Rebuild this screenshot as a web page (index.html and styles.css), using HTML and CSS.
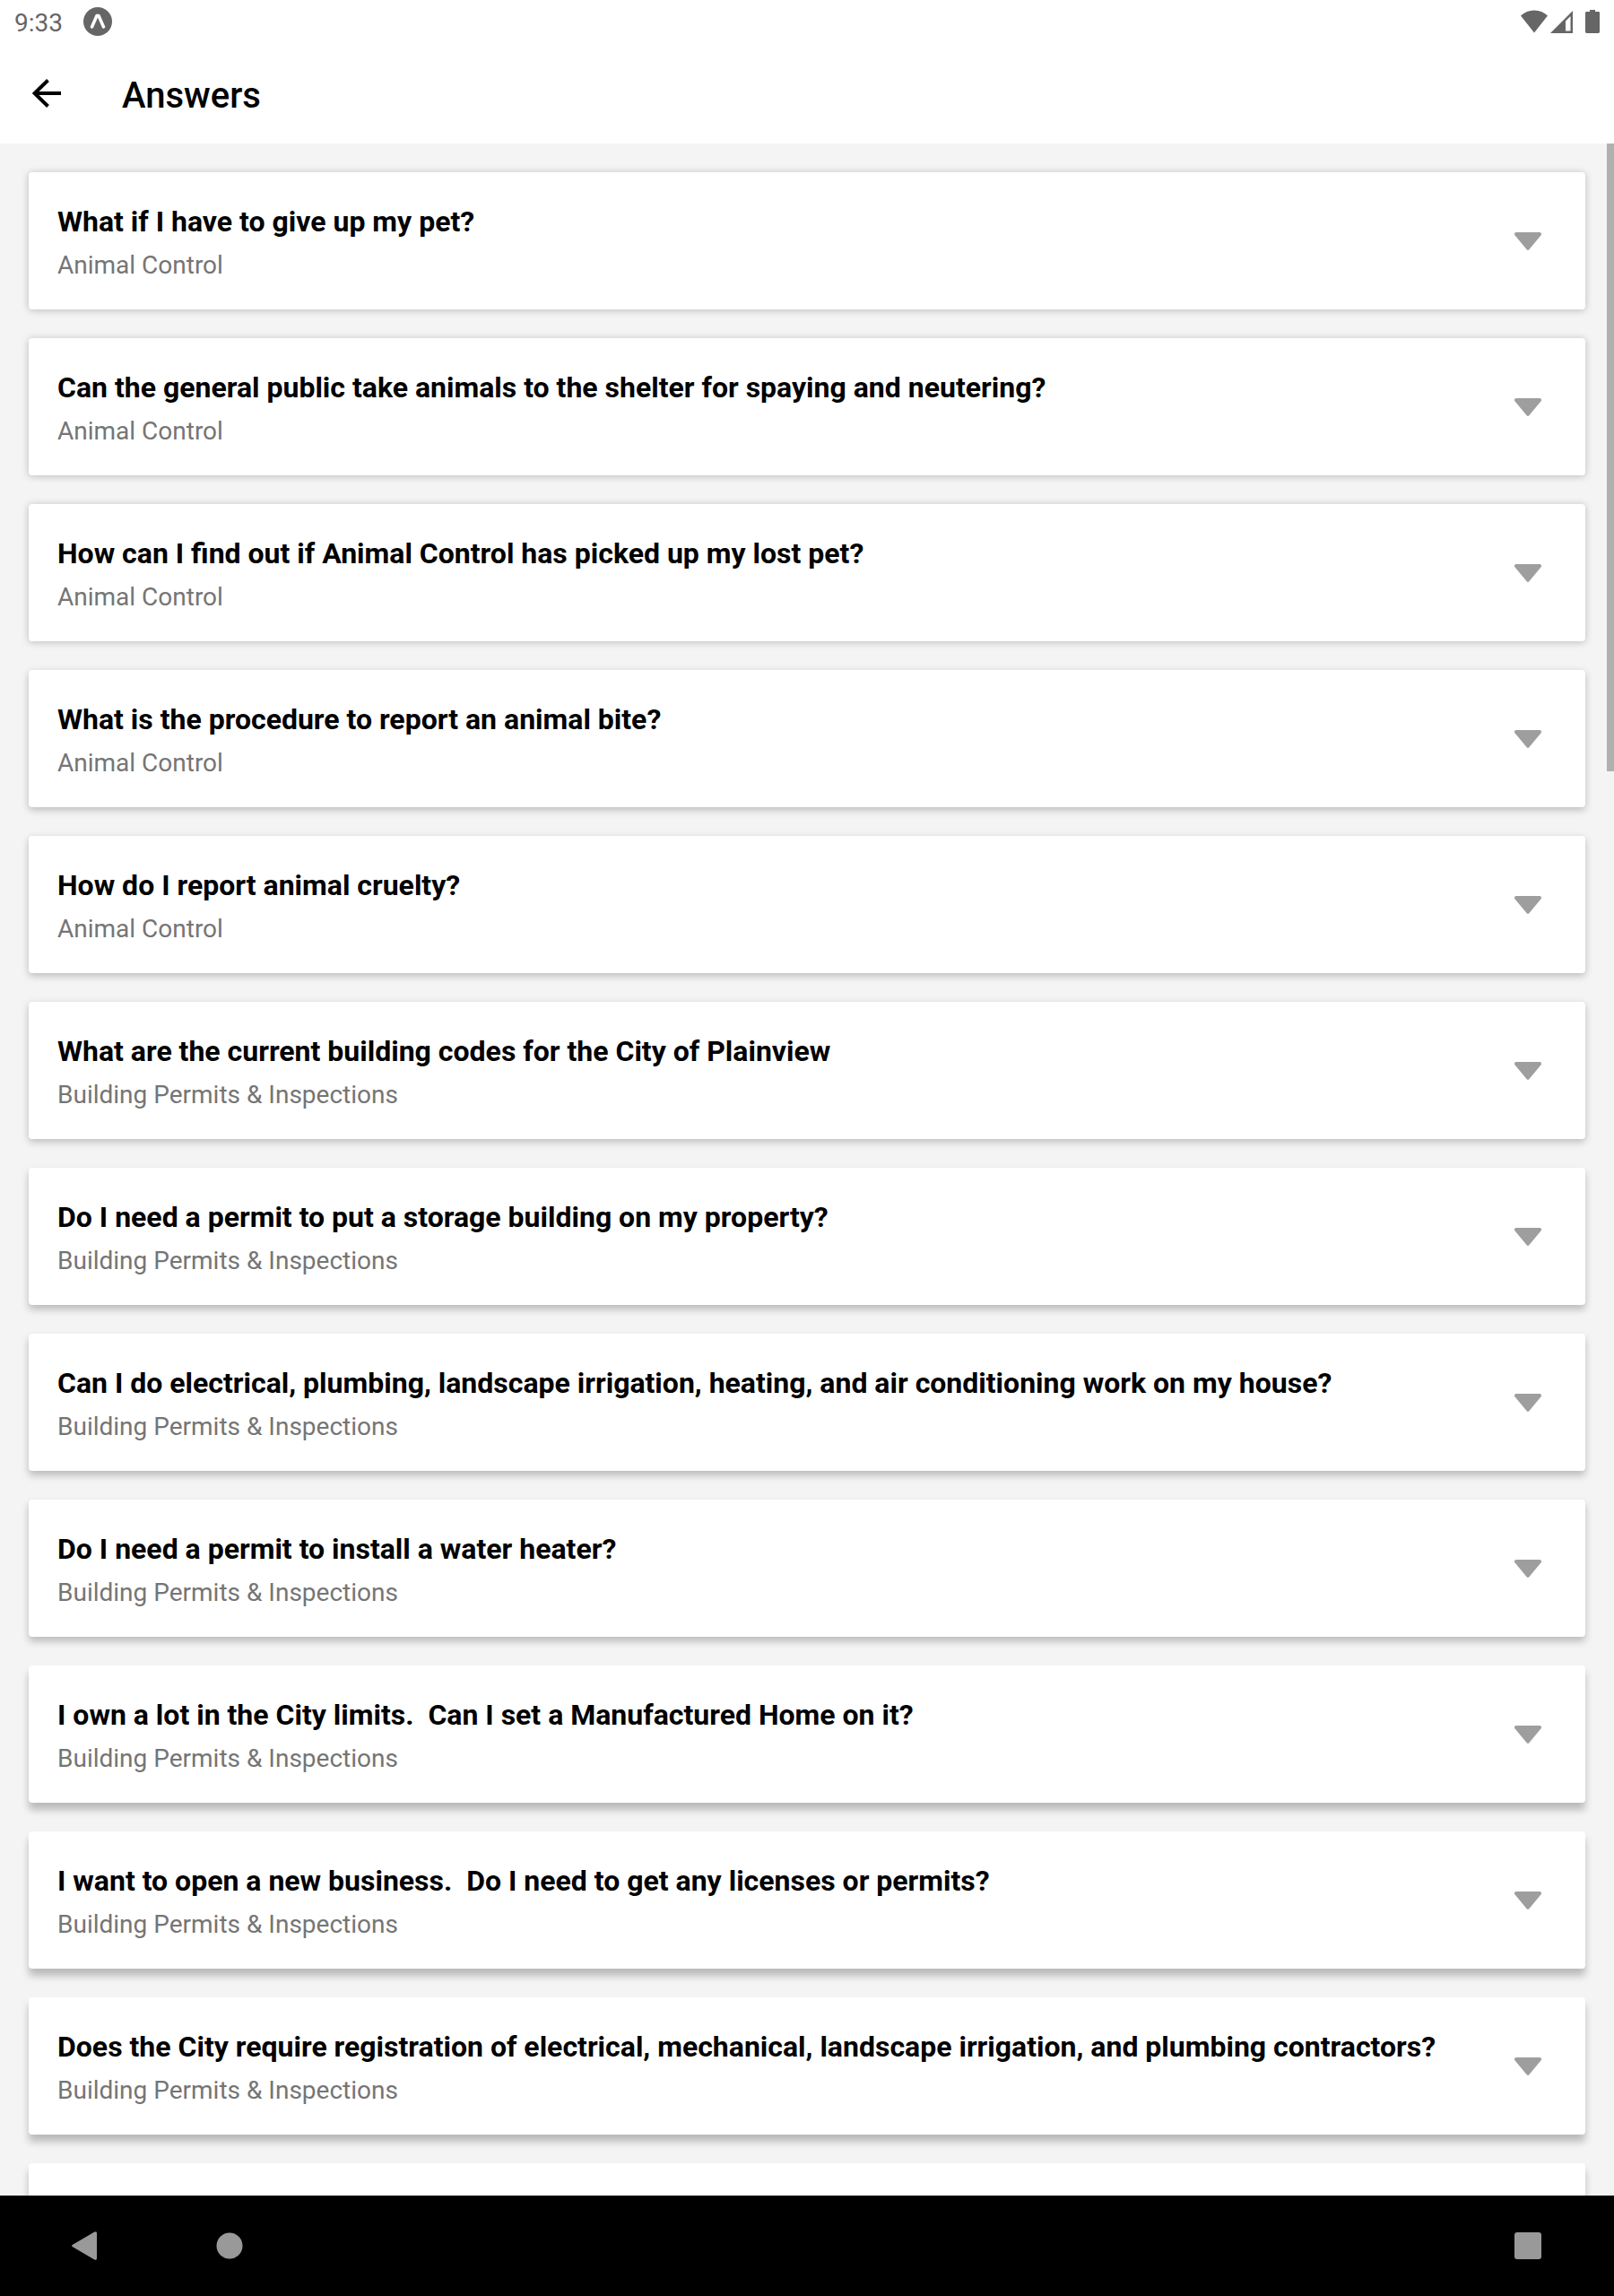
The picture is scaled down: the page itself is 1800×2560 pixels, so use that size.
FILE: index.html
```html
<!DOCTYPE html>
<html lang="en">
<head>
  <meta charset="utf-8">
  <meta name="viewport" content="width=device-width, initial-scale=1">
  <title>Answers</title>
  <link rel="stylesheet" href="styles.css">
</head>
<body>
  <div class="status-bar">
    <span class="clock">9:33</span>
    <svg class="app-badge" viewBox="0 0 32 32">
      <circle cx="16" cy="16" r="16" fill="#666" />
      <path d="M9.500 22L15 9.500h2L22.500 22" fill="none" stroke="#fff" stroke-width="3.500" stroke-linecap="round" stroke-linejoin="round" />
    </svg>
    <svg class="status-icons" viewBox="0 0 88 26" fill="#666">
      <path d="M0 6.500C4 2.500 9.500.5 15 .5s11 2 15 6L15 25.500z" />
      <path fill-rule="evenodd" d="M58 1v25H33zM55.500 7v16.500H50V12.500z" />
      <path d="M77 0h6v2h3.500c1 0 1.500.5 1.500 1.500V24c0 1-.5 2-1.500 2h-13c-1 0-1.500-1-1.500-2V3.500c0-1 .5-1.500 1.500-1.500H77z" />
    </svg>
  </div>

  <header class="app-bar">
    <button class="back-button" aria-label="Back">
      <svg viewBox="0 0 32 32" fill="none" stroke="#000" stroke-width="4">
        <path d="M2.500 16H32M17.500 1.500L2.500 16l15 14.500" />
      </svg>
    </button>
    <h1 class="title">Answers</h1>
  </header>

  <main class="content">
    <ul class="answer-list">
      <li><button class="card" aria-expanded="false">
        <span class="text">
          <span class="question">What if I have to give up my pet?</span>
          <span class="category">Animal Control</span>
        </span>
        <svg class="caret" viewBox="0 0 30 20"><use href="#caret" /></svg>
      </button></li>
      <li><button class="card" aria-expanded="false">
        <span class="text">
          <span class="question">Can the general public take animals to the shelter for spaying and neutering?</span>
          <span class="category">Animal Control</span>
        </span>
        <svg class="caret" viewBox="0 0 30 20"><use href="#caret" /></svg>
      </button></li>
      <li><button class="card" aria-expanded="false">
        <span class="text">
          <span class="question">How can I find out if Animal Control has picked up my lost pet?</span>
          <span class="category">Animal Control</span>
        </span>
        <svg class="caret" viewBox="0 0 30 20"><use href="#caret" /></svg>
      </button></li>
      <li><button class="card" aria-expanded="false">
        <span class="text">
          <span class="question">What is the procedure to report an animal bite?</span>
          <span class="category">Animal Control</span>
        </span>
        <svg class="caret" viewBox="0 0 30 20"><use href="#caret" /></svg>
      </button></li>
      <li><button class="card" aria-expanded="false">
        <span class="text">
          <span class="question">How do I report animal cruelty?</span>
          <span class="category">Animal Control</span>
        </span>
        <svg class="caret" viewBox="0 0 30 20"><use href="#caret" /></svg>
      </button></li>
      <li><button class="card" aria-expanded="false">
        <span class="text">
          <span class="question">What are the current building codes for the City of Plainview</span>
          <span class="category">Building Permits &amp; Inspections</span>
        </span>
        <svg class="caret" viewBox="0 0 30 20"><use href="#caret" /></svg>
      </button></li>
      <li><button class="card" aria-expanded="false">
        <span class="text">
          <span class="question">Do I need a permit to put a storage building on my property?</span>
          <span class="category">Building Permits &amp; Inspections</span>
        </span>
        <svg class="caret" viewBox="0 0 30 20"><use href="#caret" /></svg>
      </button></li>
      <li><button class="card" aria-expanded="false">
        <span class="text">
          <span class="question">Can I do electrical, plumbing, landscape irrigation, heating, and air conditioning work on my house?</span>
          <span class="category">Building Permits &amp; Inspections</span>
        </span>
        <svg class="caret" viewBox="0 0 30 20"><use href="#caret" /></svg>
      </button></li>
      <li><button class="card" aria-expanded="false">
        <span class="text">
          <span class="question">Do I need a permit to install a water heater?</span>
          <span class="category">Building Permits &amp; Inspections</span>
        </span>
        <svg class="caret" viewBox="0 0 30 20"><use href="#caret" /></svg>
      </button></li>
      <li><button class="card" aria-expanded="false">
        <span class="text">
          <span class="question">I own a lot in the City limits.  Can I set a Manufactured Home on it?</span>
          <span class="category">Building Permits &amp; Inspections</span>
        </span>
        <svg class="caret" viewBox="0 0 30 20"><use href="#caret" /></svg>
      </button></li>
      <li><button class="card" aria-expanded="false">
        <span class="text">
          <span class="question">I want to open a new business.  Do I need to get any licenses or permits?</span>
          <span class="category">Building Permits &amp; Inspections</span>
        </span>
        <svg class="caret" viewBox="0 0 30 20"><use href="#caret" /></svg>
      </button></li>
      <li><button class="card" aria-expanded="false">
        <span class="text">
          <span class="question">Does the City require registration of electrical, mechanical, landscape irrigation, and plumbing contractors?</span>
          <span class="category">Building Permits &amp; Inspections</span>
        </span>
        <svg class="caret" viewBox="0 0 30 20"><use href="#caret" /></svg>
      </button></li>
      <li><div class="card"></div></li>
    </ul>
    <div class="scroll-thumb"></div>
  </main>

  <nav class="nav-bar">
    <button class="nav-button" aria-label="Back">
      <svg viewBox="0 0 32 32"><path d="M1.500 14.500L25 .700Q28 -.8 28 2v28q0 2.800-3 1.300L1.500 17.500q-3-1.500 0-3z" /></svg>
    </button>
    <button class="nav-button" aria-label="Home">
      <svg viewBox="0 0 32 32"><circle cx="16" cy="16" r="14.500" /></svg>
    </button>
    <button class="nav-button recents" aria-label="Recent apps">
      <svg viewBox="0 0 32 32"><rect x="1" y="1" width="30" height="30" rx="3" /></svg>
    </button>
  </nav>

  <svg class="defs" width="0" height="0">
    <symbol id="caret" viewBox="0 0 30 20">
      <path d="M2 0h26c2 0 2.600 2 1.400 3.500L16.500 19q-1.500 1.800-3 0L.6 3.500C-.6 2 0 0 2 0z" />
    </symbol>
  </svg>
</body>
</html>
```

FILE: styles.css
```css
* {
  box-sizing: border-box;
}

body {
  margin: 0;
  height: 100vh;
  display: flex;
  flex-direction: column;
  background: #fff;
  color: #000;
  font-family: Roboto, "Liberation Sans", sans-serif;
}

button {
  border: 0;
  padding: 0;
  background: none;
  color: inherit;
  font: inherit;
  cursor: pointer;
}

svg {
  display: block;
  flex: none;
}

.defs {
  position: absolute;
}

.status-bar {
  display: flex;
  align-items: center;
  flex: none;
  height: 48px;
  padding: 0 16px;
}

.clock {
  margin-right: 23px;
  padding-top: 4px;
  color: #666;
  font-size: 28px;
  line-height: 36px;
}

.app-badge {
  width: 32px;
  height: 32px;
}

.status-icons {
  width: 88px;
  height: 26px;
  margin-left: auto;
}

.app-bar {
  display: flex;
  align-items: center;
  flex: none;
  height: 112px;
  padding: 0 36px;
  gap: 68px;
}

.back-button svg {
  width: 32px;
  height: 32px;
}

.title {
  margin: 0;
  padding-top: 6px;
  font-size: 40px;
  font-weight: 500;
  line-height: 48px;
}

.content {
  position: relative;
  flex: 1;
  min-height: 0;
  background: #f4f4f4;
}

.answer-list {
  display: flex;
  flex-direction: column;
  gap: 32px;
  height: 100%;
  margin: 0;
  padding: 32px;
  list-style: none;
  overflow-y: auto;
  scrollbar-width: none;
}

.card {
  display: flex;
  align-items: center;
  width: 100%;
  min-height: 153px;
  padding: 32px 49px 32px 32px;
  border-radius: 4px;
  background: #fff;
  box-shadow: 0 1px 8px rgba(0, 0, 0, 0.24);
  text-align: left;
}

/* shadows get longer further down the list */
li:nth-child(n+4) .card {
  box-shadow: 0 3px 8px rgba(0, 0, 0, 0.24);
}

li:nth-child(n+7) .card {
  box-shadow: 0 5px 8px rgba(0, 0, 0, 0.24);
}

li:nth-child(n+10) .card {
  box-shadow: 0 8px 8px rgba(0, 0, 0, 0.24);
}

.text {
  display: flex;
  flex-direction: column;
  flex: 1;
  gap: 8px;
}

.question {
  font-size: 32px;
  font-weight: 700;
  line-height: 46px;
  white-space: pre-wrap;
}

.category {
  color: #757575;
  font-size: 28px;
  line-height: 35px;
}

.caret {
  width: 30px;
  height: 20px;
  fill: #9e9e9e;
}

.scroll-thumb {
  position: absolute;
  top: 0;
  right: 0;
  width: 8px;
  height: 30.6%;
  background: #b0b0b0;
}

.nav-bar {
  display: flex;
  align-items: center;
  flex: none;
  height: 112px;
  padding: 0 80px;
  gap: 128px;
  background: #000;
}

.nav-button svg {
  width: 32px;
  height: 32px;
  fill: #999;
}

.recents {
  margin-left: auto;
}
```
